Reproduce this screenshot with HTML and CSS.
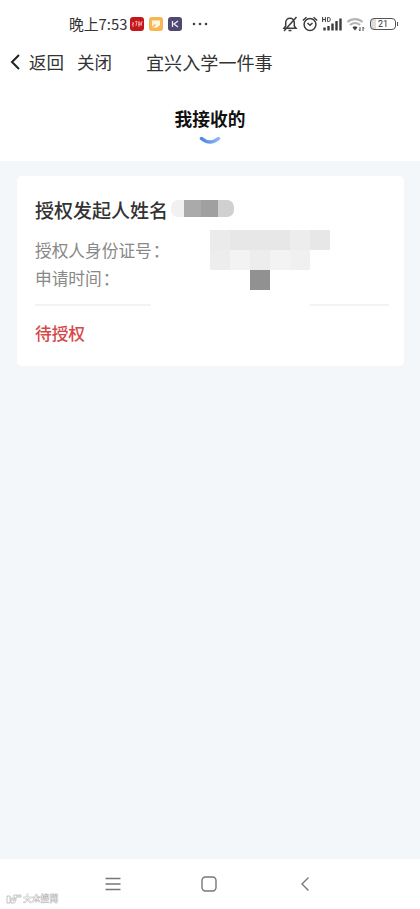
FILE: index.html
```
<!DOCTYPE html>
<html lang="zh-CN">
<head>
  <meta charset="UTF-8" />
  <meta name="viewport" content="width=device-width, initial-scale=1.0" />
  <title>宜兴入学一件事</title>
  <link rel="stylesheet" href="styles.css">
</head>
<body>
  <div class="status-bar">
    <span class="time">晚上7:53</span>
    <div class="apps">
      <svg class="app" viewBox="0 0 14 14"><rect width="14" height="14" rx="3" fill="#c5161d"/><path d="M2 8l2-2M3 5v5M5 5l2-1-1 5M8 6h3M9 4v6M8 8l3-1M12 4l-1 5" stroke="#f3b5b0" stroke-width=".9" fill="none"/></svg>
      <svg class="app" viewBox="0 0 14 14"><rect width="14" height="14" rx="3" fill="#f6b653"/><path d="M3 3.500h8V8l-3 2.500H3z" fill="#fff6df"/><path d="M3 10.500L6.500 7.500" stroke="#f6b653" stroke-width="1.500"/></svg>
      <svg class="app" viewBox="0 0 14 14"><rect width="14" height="14" rx="3" fill="#51486f"/><path d="M4.500 4v6M10 4L6 7l4 3" stroke="#eeeaf8" stroke-width="1.300" fill="none"/></svg>
    </div>
    <svg class="more" viewBox="0 0 16 4"><circle cx="2" cy="2" r="1.300"/><circle cx="8" cy="2" r="1.300"/><circle cx="14" cy="2" r="1.300"/></svg>
    <div class="signals">
      <svg width="16" height="16" viewBox="0 0 16 16" fill="none" stroke="#3c3c3c" stroke-width="1.500"><path d="M2 12.300h12L12.300 10V6.500a4.300 4.300 0 0 0-8.600 0V10zM6.500 14.600h3M14.500 1L2 15"/></svg>
      <svg width="16" height="16" viewBox="0 0 16 16" fill="none" stroke="#3c3c3c" stroke-width="1.500"><circle cx="8" cy="8.500" r="5.900"/><path d="M.8 4.500L4.500 1.300M15.200 4.500L11.500 1.300M5.500 7L8 9.300 10.500 7"/></svg>
      <svg width="20" height="16" viewBox="0 0 20 16"><path d="M.6 1v5M3.400 1v5M.6 3.500h2.800M5.600 1.500v4h1c2.300 0 2.300-4 0-4z" fill="none" stroke="#3c3c3c"/><path d="M2.500 11.500v3M6.500 10v4.500M10.500 7.500v7M14.500 5v9.500M18.500 2.500v12" stroke="#3c3c3c" stroke-width="2.400"/></svg>
      <svg width="20" height="16" viewBox="0 0 20 16" fill="none"><path d="M1.500 6a11 11 0 0 1 15 0M4 9a7.300 7.300 0 0 1 10 0" stroke="#b5b5b5" stroke-width="2.200"/><path d="M6.500 11.500a3.700 3.700 0 0 1 5 0L9 14.500z" fill="#444"/><path d="M14 11v4M17 11v4M13 13.500l1 1.500M18 12.500L17 11" stroke="#555"/></svg>
      <div class="battery"><span>21</span></div>
    </div>
  </div>

  <div class="nav">
    <svg class="back-icon" viewBox="0 0 12 18"><path d="M10 2L3 9l7 7" fill="none" stroke="#222" stroke-width="2"/></svg>
    <span class="back">返回</span>
    <span class="close">关闭</span>
    <span class="title">宜兴入学一件事</span>
  </div>

  <div class="tab">
    <span>我接收的</span>
    <svg width="22" height="9" viewBox="0 0 22 9"><defs><linearGradient id="smile"><stop offset="0" stop-color="#4c83e6"/><stop offset="1" stop-color="#8db6f5"/></linearGradient></defs><path d="M2.500 2.500q8.500 7 17 0" fill="none" stroke="url(#smile)" stroke-width="3.500" stroke-linecap="round"/></svg>
  </div>

  <div class="content">
    <div class="card">
      <div class="name-row">
        <span>授权发起人姓名</span>
        <div class="name-mask"><i></i><i></i><i></i><i></i></div>
      </div>
      <div class="details">
        <div class="labels">
          <div>授权人身份证号<span class="colon">：</span></div>
          <div>申请时间<span class="colon">：</span></div>
        </div>
        <svg class="mosaic" width="120" height="60" viewBox="0 0 120 60" shape-rendering="crispEdges">
          <path fill="#ebebeb" d="M0 0h20v20H0z"/>
          <path fill="#e7e7e7" d="M20 0h60v20H20zM100 0h20v20h-20z"/>
          <path fill="#ededed" d="M80 0h20v20H80zM0 20h20v20H0zM40 20h20v20H40z"/>
          <path fill="#f3f3f3" d="M20 20h20v20H20zM60 20h20v20H60z"/>
          <path fill="#f0f0f0" d="M80 20h20v20H80z"/>
          <path fill="#919191" d="M40 40h20v20H40z"/>
        </svg>
      </div>
      <div class="divider"><i></i><i></i></div>
      <div class="state">待授权</div>
    </div>
  </div>

  <div class="bottom-bar">
    <svg width="16" height="16" viewBox="0 0 16 16"><path d="M.5 2.500h15M.5 8h15M.5 13.500h15"/></svg>
    <svg width="16" height="16" viewBox="0 0 16 16"><rect x="1" y="1" width="14" height="14" rx="3.500"/></svg>
    <svg width="16" height="16" viewBox="0 0 16 16"><path d="M11.500 1.500L5 8l6.500 6.500"/></svg>
    <div class="watermark">
      <svg width="16" height="11" viewBox="0 0 16 11"><path d="M1 2h3v7H1zM5 4v5q5 1 5-4H8v2H7V4zM8 1h3v3H8zM12 1h3v2h-3z"/></svg>
      <span>大众搜网</span>
    </div>
  </div>
</body>
</html>
```
FILE: styles.css
```
* {
  box-sizing: border-box;
}
body {
  margin: 0;
  height: 909px;
  display: flex;
  flex-direction: column;
  background: #fff;
  color: #333;
  font-family: "Noto Sans CJK SC", sans-serif;
  overflow: hidden;
}
svg {
  display: block;
  flex: none;
}
.status-bar {
  display: flex;
  align-items: center;
  height: 40px;
  padding: 8px 24px 0 69px;
}
.time {
  width: 61px;
  font-size: 14.8px;
  line-height: 20px;
  white-space: nowrap;
}
.apps {
  display: flex;
  gap: 5px;
}
.app {
  width: 14px;
  height: 14px;
}
.more {
  width: 16px;
  height: 4px;
  margin-left: 10px;
  fill: #444;
}
.signals {
  display: flex;
  align-items: center;
  gap: 4px;
  margin-left: auto;
}
.battery {
  position: relative;
  width: 26px;
  height: 12px;
  border: 1.5px solid #555;
  border-radius: 4px;
  background: linear-gradient(to right, #ddd 5px, #fff 5px);
  font: 9px/10px Roboto, sans-serif;
  text-align: center;
}
.battery::after {
  content: "";
  position: absolute;
  right: -3px;
  top: 3px;
  width: 1px;
  height: 4px;
  background: #555;
}
.nav {
  display: flex;
  align-items: center;
  height: 44px;
  padding-left: 9px;
  font-size: 17.5px;
  line-height: 26px;
  white-space: nowrap;
}
.nav span {
  padding-bottom: 1px;
}
.back-icon {
  width: 12px;
  height: 18px;
  margin-right: 8px;
}
.close {
  margin-left: 13px;
}
.title {
  margin-left: 34px;
  font-size: 18.1px;
}
.tab {
  display: flex;
  flex-direction: column;
  align-items: center;
  height: 77px;
  padding-top: 21px;
  color: #111;
  font-size: 17.7px;
  font-weight: 700;
  line-height: 26px;
}
.tab svg {
  margin-top: 5px;
}
.content {
  flex: 1;
  padding: 15px 16px 0 17px;
  background: #f3f7fa;
}
.card {
  height: 190px;
  padding: 19px 15px 0 18px;
  border-radius: 5px;
  background: #fff;
}
.name-row {
  display: flex;
  align-items: center;
  height: 28px;
  font-size: 19px;
  font-weight: 500;
}
.name-mask {
  display: flex;
  width: 63px;
  height: 17px;
  margin: 0 0 1px 3px;
  border-radius: 7px;
  overflow: hidden;
}
.name-mask i {
  flex: 0 0 17px;
  background: #aaa;
}
.name-mask i:first-child {
  flex-basis: 13px;
  background: #f1f1f1;
}
.name-mask i:nth-child(3) {
  background: #a0a0a0;
}
.name-mask i:last-child {
  background: #d0d0d0;
}
.details {
  display: flex;
  height: 81px;
  padding-top: 7px;
  color: #888;
  font-size: 16.7px;
  line-height: 28px;
}
.labels {
  width: 175px;
  padding-top: 6px;
  white-space: nowrap;
}
.colon {
  margin-left: 1px;
}
.divider {
  display: flex;
  justify-content: space-between;
  height: 2px;
}
.divider i {
  width: 116px;
  background: #f3f3f3;
}
.divider i:last-child {
  width: 79px;
}
.state {
  margin-top: 13px;
  color: #d54848;
  font-size: 16.7px;
  font-weight: 500;
  line-height: 28px;
}
.bottom-bar {
  position: relative;
  display: flex;
  gap: 80px;
  height: 50px;
  padding: 17px 0 0 105px;
}
.bottom-bar > svg {
  fill: none;
  stroke: #777;
  stroke-width: 1.4;
}
.watermark {
  position: absolute;
  left: 6px;
  bottom: 4px;
  display: flex;
  align-items: center;
  gap: 1px;
  color: #fff;
  font-size: 8.8px;
  font-weight: 700;
  line-height: 12px;
  -webkit-text-stroke: 0.4px #aaa;
}
.watermark svg {
  fill: none;
  stroke: #aaa;
  stroke-width: 0.7;
}
```
